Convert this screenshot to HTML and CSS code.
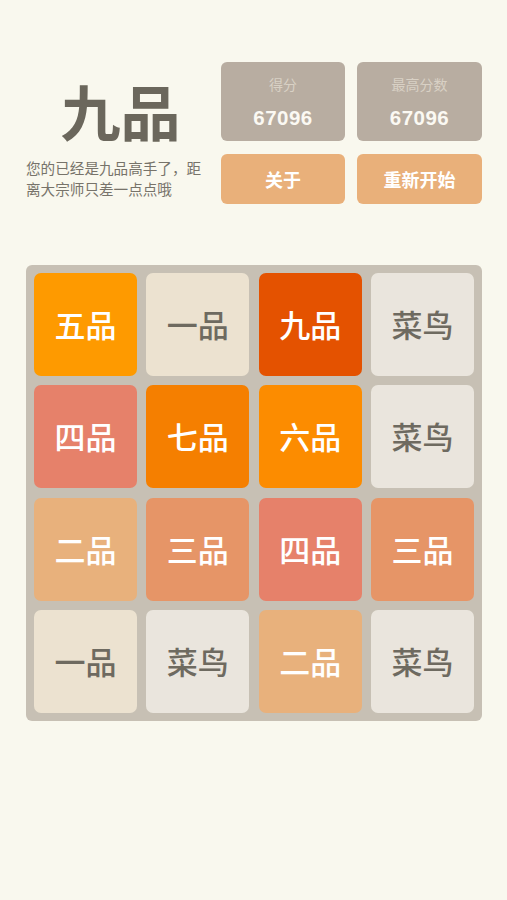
FILE: index.html
```html
<!DOCTYPE html>
<html lang="zh">
<head>
<meta charset="utf-8">
<title>九品</title>
<link rel="stylesheet" href="styles.css">
</head>
<body>
<div class="page">
  <header class="header">
    <div class="intro">
      <h1 class="title">九品</h1>
      <p class="desc">您的已经是九品高手了，距离大宗师只差一点点哦</p>
    </div>
    <div class="panel">
      <div class="score"><span class="label">得分</span><span class="num">67096</span></div>
      <div class="score"><span class="label">最高分数</span><span class="num">67096</span></div>
      <div class="btn">关于</div>
      <div class="btn">重新开始</div>
    </div>
  </header>
  <div class="board">
    <div class="tile t5">五品</div>
    <div class="tile t1">一品</div>
    <div class="tile t9">九品</div>
    <div class="tile t0">菜鸟</div>
    <div class="tile t4">四品</div>
    <div class="tile t7">七品</div>
    <div class="tile t6">六品</div>
    <div class="tile t0">菜鸟</div>
    <div class="tile t2">二品</div>
    <div class="tile t3">三品</div>
    <div class="tile t4">四品</div>
    <div class="tile t3">三品</div>
    <div class="tile t1">一品</div>
    <div class="tile t0">菜鸟</div>
    <div class="tile t2">二品</div>
    <div class="tile t0">菜鸟</div>
  </div>
</div>
</body>
</html>
```

FILE: styles.css
```css
html, body {
  margin: 0;
  padding: 0;
  background: #f9f8ee;
}
body {
  font-family: "Noto Sans CJK SC", "Noto Sans", sans-serif;
  width: 507px;
  height: 900px;
}
.page {
  padding: 62px 25px 0 26px;
}
.header {
  display: flex;
  gap: 12px;
}
.intro {
  width: 183px;
  display: flex;
  flex-direction: column;
}
.title {
  margin: 10px 0 0 0;
  font-size: 60px;
  line-height: 76px;
  font-weight: 700;
  color: #6b675c;
  text-align: center;
  padding-left: 6px;
}
.desc {
  margin: 9px 0 0 0;
  font-size: 14.6px;
  line-height: 21px;
  color: #77736a;
  width: 180px;
}
.panel {
  display: grid;
  grid-template-columns: 124px 125px;
  grid-template-rows: 79px 50px;
  column-gap: 12px;
  row-gap: 13px;
}
.score {
  background: #b8ada1;
  border-radius: 6px;
  display: flex;
  flex-direction: column;
  align-items: center;
}
.label {
  margin-top: 12px;
  font-size: 14px;
  line-height: 20px;
  color: #d9d1c5;
}
.num {
  margin-top: 12px;
  font-family: "Liberation Sans", "Noto Sans", sans-serif;
  font-size: 20.5px;
  line-height: 24px;
  font-weight: 700;
  color: #fbf9f3;
  letter-spacing: 0.5px;
}
.btn {
  background: #e9b07a;
  border-radius: 6px;
  display: flex;
  align-items: center;
  justify-content: center;
  color: #ffffff;
  font-size: 18px;
  font-weight: 700;
}
.board {
  margin-top: 61px;
  width: 456px;
  height: 456px;
  box-sizing: border-box;
  padding: 8px;
  background: #c7c0b4;
  border-radius: 6px;
  display: grid;
  grid-template-columns: repeat(4, 1fr);
  grid-template-rows: repeat(4, 1fr);
  gap: 9.3px;
}
.tile {
  border-radius: 7px;
  display: flex;
  align-items: center;
  justify-content: center;
  font-size: 31px;
  font-weight: 500;
  color: #ffffff;
  padding-bottom: 2px;
}
.t0 { background: #eae5dd; color: #6e6a60; }
.t1 { background: #ece2d0; color: #6e6a60; }
.t2 { background: #e8b17c; }
.t3 { background: #e69567; }
.t4 { background: #e6816a; }
.t5 { background: #fe9a00; }
.t6 { background: #fc8c00; }
.t7 { background: #f57f00; }
.t9 { background: #e45200; }
```
